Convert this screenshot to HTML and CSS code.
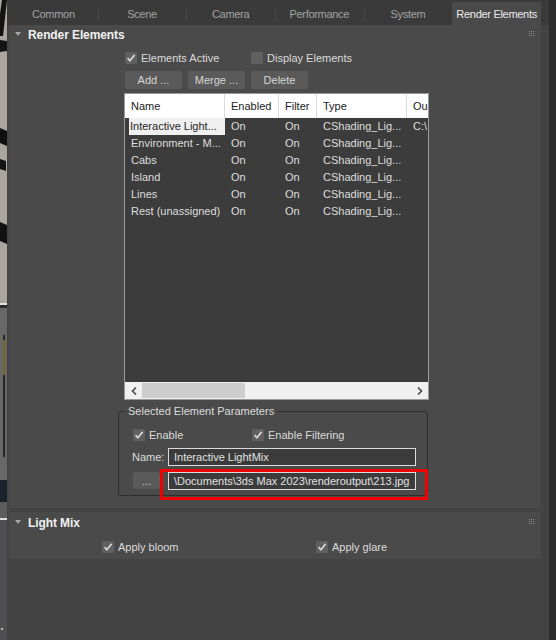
FILE: index.html
```html
<!DOCTYPE html>
<html>
<head>
<meta charset="utf-8">
<title>Render Setup - Render Elements</title>
<link rel="stylesheet" href="styles.css">
</head>
<body>
<div class="screen">
  <div class="bgstrip">
    <svg width="7" height="640" viewBox="0 0 7 640">
      <rect width="7" height="303" fill="#aaa59e"/>
      <polygon points="2,0 7,0 3,36 0,36 0,14" fill="#121212"/>
      <polygon points="0,40 7,41 7,51 0,52" fill="#141414"/>
      <polygon points="0,128 7,131 7,146 0,143" fill="#0f0f0f"/>
      <polygon points="0,159 6,161 6,171 0,169" fill="#141414"/>
      <polygon points="0,222 7,225 7,244 0,241" fill="#111"/>
      <rect y="303" width="7" height="2" fill="#e4e4e4"/>
      <rect y="305" width="7" height="3" fill="#2a2a2a"/>
      <rect y="308" width="7" height="172" fill="#686868"/>
      <rect x="3" y="335" width="2" height="122" fill="#262626"/>
      <rect x="3.5" y="340" width="1" height="35" fill="#c9a822"/>
      <rect y="480" width="7" height="22" fill="#1c2229"/>
      <rect y="502" width="7" height="16" fill="#5c5c5c"/>
      <rect y="518" width="7" height="2" fill="#dcdcdc"/>
      <rect y="520" width="7" height="120" fill="#4e4f51"/>
      <rect x="1" y="628" width="2" height="2" fill="#c9b79a"/>
    </svg>
  </div>

  <div class="main">
    <div class="tabs">
      <div class="tab">Common</div>
      <div class="tab sep">Scene</div>
      <div class="tab sep">Camera</div>
      <div class="tab sep">Performance</div>
      <div class="tab sep">System</div>
      <div class="tab active">Render Elements</div>
    </div>

    <div class="rollout re">
      <div class="roll-head">
        <svg class="tri" width="6" height="4" viewBox="0 0 6 4"><polygon points="0,0 6,0 3,4" fill="#a8a8a8"/></svg>
        <span class="roll-title">Render Elements</span>
        <svg class="grip" width="5" height="5" viewBox="0 0 5 5">
          <g fill="#8c8c8c">
            <rect x="0" y="0" width="1" height="1"/><rect x="2" y="0" width="1" height="1"/><rect x="4" y="0" width="1" height="1"/>
            <rect x="0" y="2" width="1" height="1"/><rect x="2" y="2" width="1" height="1"/><rect x="4" y="2" width="1" height="1"/>
            <rect x="0" y="4" width="1" height="1"/><rect x="2" y="4" width="1" height="1"/><rect x="4" y="4" width="1" height="1"/>
          </g>
        </svg>
      </div>

      <div class="re-body">
        <div class="chk-row top-chks">
          <div class="chk w126">
            <span class="box"><svg width="12" height="12" viewBox="0 0 12 12"><path d="M2.6 6.1 L4.9 8.7 L9.6 2.9" fill="none" stroke="#d8d8d8" stroke-width="1.7"/></svg></span>
            <span>Elements Active</span>
          </div>
          <div class="chk">
            <span class="box"></span>
            <span>Display Elements</span>
          </div>
        </div>

        <div class="btn-row">
          <div class="btn">Add ...</div>
          <div class="btn">Merge ...</div>
          <div class="btn">Delete</div>
        </div>

        <div class="list">
          <div class="list-head">
            <div class="c c1">Name</div>
            <div class="c c2">Enabled</div>
            <div class="c c3">Filter</div>
            <div class="c c4">Type</div>
            <div class="c c5">Ou</div>
          </div>
          <div class="list-body">
            <div class="lrow">
              <div class="c c1 selc"><span class="sel">Interactive Light...</span></div>
              <div class="c c2">On</div>
              <div class="c c3">On</div>
              <div class="c c4">CShading_Lig...</div>
              <div class="c c5">C:\</div>
            </div>
            <div class="lrow">
              <div class="c c1">Environment - M...</div>
              <div class="c c2">On</div>
              <div class="c c3">On</div>
              <div class="c c4">CShading_Lig...</div>
              <div class="c c5"></div>
            </div>
            <div class="lrow">
              <div class="c c1">Cabs</div>
              <div class="c c2">On</div>
              <div class="c c3">On</div>
              <div class="c c4">CShading_Lig...</div>
              <div class="c c5"></div>
            </div>
            <div class="lrow">
              <div class="c c1">Island</div>
              <div class="c c2">On</div>
              <div class="c c3">On</div>
              <div class="c c4">CShading_Lig...</div>
              <div class="c c5"></div>
            </div>
            <div class="lrow">
              <div class="c c1">Lines</div>
              <div class="c c2">On</div>
              <div class="c c3">On</div>
              <div class="c c4">CShading_Lig...</div>
              <div class="c c5"></div>
            </div>
            <div class="lrow">
              <div class="c c1">Rest (unassigned)</div>
              <div class="c c2">On</div>
              <div class="c c3">On</div>
              <div class="c c4">CShading_Lig...</div>
              <div class="c c5"></div>
            </div>
          </div>
          <div class="hscroll">
            <div class="arrow">
              <svg width="6" height="8" viewBox="0 0 6 8"><polyline points="5,0.5 1.5,4 5,7.5" fill="none" stroke="#4a4a4a" stroke-width="1.6"/></svg>
            </div>
            <div class="track"><div class="thumb"></div></div>
            <div class="arrow">
              <svg width="6" height="8" viewBox="0 0 6 8"><polyline points="1,0.5 4.5,4 1,7.5" fill="none" stroke="#4a4a4a" stroke-width="1.6"/></svg>
            </div>
          </div>
        </div>

        <fieldset class="group">
          <legend>Selected Element Parameters</legend>
          <div class="chk-row grp-chks">
            <div class="chk w119">
              <span class="box"><svg width="12" height="12" viewBox="0 0 12 12"><path d="M2.6 6.1 L4.9 8.7 L9.6 2.9" fill="none" stroke="#d8d8d8" stroke-width="1.7"/></svg></span>
              <span>Enable</span>
            </div>
            <div class="chk">
              <span class="box"><svg width="12" height="12" viewBox="0 0 12 12"><path d="M2.6 6.1 L4.9 8.7 L9.6 2.9" fill="none" stroke="#d8d8d8" stroke-width="1.7"/></svg></span>
              <span>Enable Filtering</span>
            </div>
          </div>
          <div class="name-row">
            <span class="name-label">Name:</span>
            <div class="field">Interactive LightMix</div>
          </div>
          <div class="path-row">
            <div class="btn dots">...</div>
            <div class="field">\Documents\3ds Max 2023\renderoutput\213.jpg</div>
          </div>
        </fieldset>
      </div>
    </div>

    <div class="rollout lm">
      <div class="roll-head">
        <svg class="tri" width="6" height="4" viewBox="0 0 6 4"><polygon points="0,0 6,0 3,4" fill="#a8a8a8"/></svg>
        <span class="roll-title">Light Mix</span>
        <svg class="grip" width="5" height="5" viewBox="0 0 5 5">
          <g fill="#8c8c8c">
            <rect x="0" y="0" width="1" height="1"/><rect x="2" y="0" width="1" height="1"/><rect x="4" y="0" width="1" height="1"/>
            <rect x="0" y="2" width="1" height="1"/><rect x="2" y="2" width="1" height="1"/><rect x="4" y="2" width="1" height="1"/>
            <rect x="0" y="4" width="1" height="1"/><rect x="2" y="4" width="1" height="1"/><rect x="4" y="4" width="1" height="1"/>
          </g>
        </svg>
      </div>
      <div class="chk-row lm-chks">
        <div class="chk w214">
          <span class="box"><svg width="12" height="12" viewBox="0 0 12 12"><path d="M2.6 6.1 L4.9 8.7 L9.6 2.9" fill="none" stroke="#d8d8d8" stroke-width="1.7"/></svg></span>
          <span>Apply bloom</span>
        </div>
        <div class="chk">
          <span class="box"><svg width="12" height="12" viewBox="0 0 12 12"><path d="M2.6 6.1 L4.9 8.7 L9.6 2.9" fill="none" stroke="#d8d8d8" stroke-width="1.7"/></svg></span>
          <span>Apply glare</span>
        </div>
      </div>
    </div>
  </div>

  <div class="rstrip"></div>
</div>
<div class="annot"></div>
</body>
</html>
```

FILE: styles.css
```css
* { box-sizing: border-box; }

body {
  margin: 0;
  background: #444444;
  font-family: "Liberation Sans", Arial, sans-serif;
  font-size: 11px;
  color: #dcdcdc;
}

.screen {
  display: flex;
  width: 556px;
  height: 640px;
  overflow: hidden;
}

.bgstrip { width: 7px; flex: none; }
.bgstrip svg { display: block; }

.main {
  width: 542px;
  flex: none;
  background: #434343;
  display: flex;
  flex-direction: column;
}

.rstrip {
  width: 7px;
  flex: none;
  background: #2c2c2c;
}

/* tabs */
.tabs {
  height: 25px;
  flex: none;
  background: #3a3a3a;
  display: grid;
  grid-template-columns: repeat(6, 88.67px);
  padding-left: 2px;
}
.tab {
  display: flex;
  align-items: center;
  justify-content: center;
  padding-top: 3px;
  color: #a3a3a3;
  letter-spacing: -0.3px;
  white-space: nowrap;
}
.tab.sep {
  background-image: linear-gradient(#474747, #474747);
  background-size: 1px 15px;
  background-position: left 7px;
  background-repeat: no-repeat;
}
.tab.active {
  margin-top: 2px;
  padding-top: 0;
  background: #4a4a4a;
  color: #ececec;
}

/* rollouts */
.rollout {
  margin-left: 2px;
  width: 532px;
  background: #4a4a4a;
  flex: none;
}
.re { height: 483px; }
.lm { margin-top: 4px; height: 47px; }

.roll-head {
  height: 20px;
  display: flex;
  align-items: center;
}
.tri { margin-left: 6px; margin-top: -2px; flex: none; }
.roll-title {
  margin-left: 7px;
  font-weight: bold;
  font-size: 12px;
  color: #f0f0f0;
  letter-spacing: -0.1px;
}
.lm .roll-head { padding-top: 1px; }
.grip {
  margin-left: auto;
  margin-right: 7px;
  align-self: flex-start;
  margin-top: 6px;
}

.re-body { padding-left: 109px; }

/* checkboxes */
.chk-row { display: flex; height: 12px; }
.chk {
  display: flex;
  align-items: center;
  gap: 4px;
  white-space: nowrap;
}
.box {
  width: 12px;
  height: 12px;
  flex: none;
  background: #606060;
  border-radius: 1px;
}
.box svg { display: block; }
.w126 { width: 126px; }
.w119 { width: 119px; }
.w214 { width: 214px; }

.top-chks { margin-top: 7px; padding-left: 7px; }

/* buttons */
.btn-row {
  margin-top: 7px;
  padding-left: 7px;
  display: flex;
  gap: 6px;
}
.btn {
  width: 57px;
  height: 18px;
  background: #5a5a5a;
  border-radius: 2px;
  color: #d6d6d6;
  display: flex;
  align-items: center;
  justify-content: center;
}

/* list */
.list {
  margin-top: 4px;
  margin-left: 6px;
  width: 305px;
  height: 307px;
  border: 1px solid #9a9a9a;
  background: #3c3c3c;
  display: flex;
  flex-direction: column;
  overflow: hidden;
}
.list-head {
  height: 24px;
  flex: none;
  background: #ffffff;
  color: #1c1c1c;
  display: flex;
}
.list-head .c {
  line-height: 24px;
  border-right: 1px solid #dadada;
}
.list-head .c5 { border-right: none; }
.c {
  flex: none;
  padding-left: 6px;
  white-space: nowrap;
  overflow: hidden;
}
.c1 { width: 100px; }
.c2 { width: 54px; }
.c3 { width: 38px; }
.c4 { width: 90px; }
.c5 { flex: 1; }

.list-body { flex: 1; }
.lrow {
  display: flex;
  height: 17px;
  line-height: 17px;
  color: #dedede;
}
.lrow .selc { padding-left: 4px; }
.sel {
  display: block;
  width: 96px;
  padding-left: 1px;
  background: #efefef;
  color: #262626;
}

.hscroll {
  height: 17px;
  flex: none;
  background: #f0f0f0;
  display: flex;
}
.arrow {
  width: 17px;
  flex: none;
  display: flex;
  align-items: center;
  justify-content: center;
}
.track { flex: 1; padding-top: 1px; }
.thumb {
  width: 103px;
  height: 15px;
  background: #cdcdcd;
}

/* group box */
.group {
  margin: 5px 0 0 0;
  padding: 0 0 5px 0;
  width: 310px;
  min-width: 0;
  border: 1px solid #2e2e2e;
  border-radius: 3px;
}
.group legend {
  margin-left: 6px;
  padding: 0 3px;
  line-height: 13px;
  color: #dcdcdc;
}
.grp-chks { margin-top: 11px; padding-left: 14px; }

.name-row {
  margin-top: 7px;
  display: flex;
  align-items: center;
  padding-left: 13px;
}
.name-label { width: 36px; }
.field {
  width: 248px;
  height: 18px;
  border: 1px solid #dcdcdc;
  background: #3b3b3b;
  color: #e2e2e2;
  padding-left: 5px;
  line-height: 16px;
  white-space: nowrap;
  overflow: hidden;
}
.path-row {
  margin-top: 6px;
  display: flex;
  padding-left: 14px;
  gap: 8px;
}
.btn.dots {
  width: 27px;
  height: 17px;
  color: #c8c8c8;
}

.lm-chks { margin-top: 9px; padding-left: 93px; }

/* red highlight annotation drawn over the screenshot */
.annot {
  position: absolute;
  left: 160px;
  top: 469px;
  width: 268px;
  height: 31px;
  border: 3px solid #f20000;
}
```
